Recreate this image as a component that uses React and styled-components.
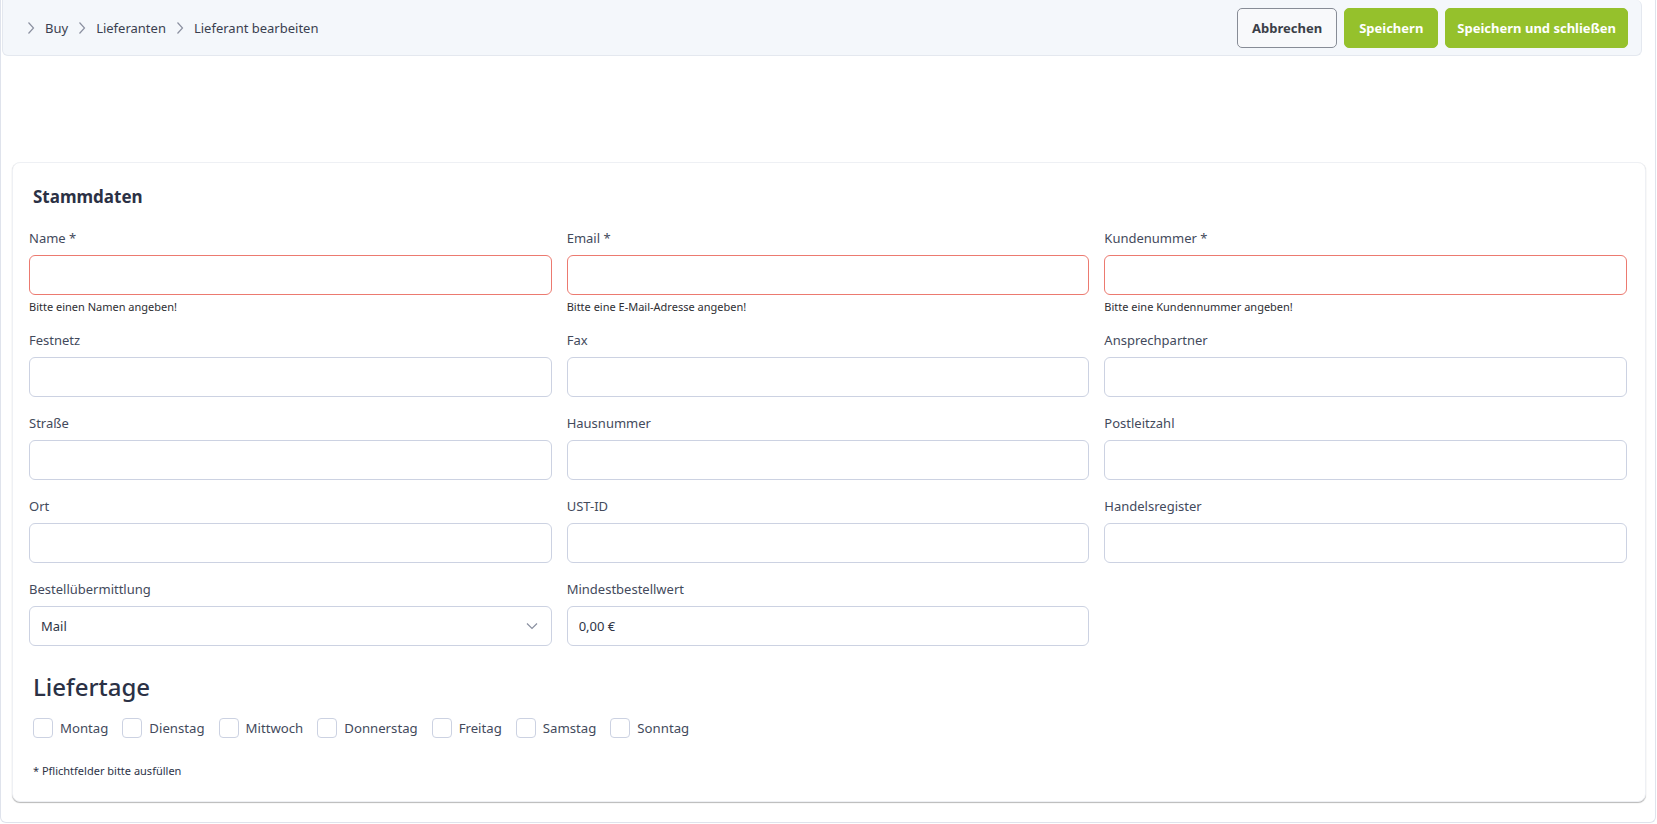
import React from "react";
import styled, { createGlobalStyle } from "styled-components";

const GlobalStyle = createGlobalStyle`
  html, body {
    margin: 0;
    padding: 0;
    background: #ffffff;
  }
  body {
    font-family: "Noto Sans", "Open Sans", "Liberation Sans", sans-serif;
    color: #3d4456;
  }
  * {
    box-sizing: border-box;
  }
`;

const Frame = styled.div`
  width: 1656px;
  height: 823px;
  border: 1px solid #dfe3ec;
  border-top: none;
  border-radius: 0 0 6px 6px;
  display: flex;
  flex-direction: column;
`;

const Header = styled.header`
  height: 56px;
  margin: 0 13px 0 1px;
  background: #f4f7fb;
  border: 1px solid #e4e8ef;
  border-top: none;
  border-radius: 0 6px 6px 6px;
  display: flex;
  align-items: center;
  justify-content: space-between;
  padding: 0 13px 0 24px;
`;

const Crumbs = styled.nav`
  display: flex;
  align-items: center;
  gap: 10px;
  font-size: 13px;
  color: #3a3f50;
`;

const Crumb = styled.span`
  line-height: 20px;
`;

const Actions = styled.div`
  display: flex;
  gap: 7px;
`;

const Button = styled.button`
  height: 40px;
  padding: 0 ${(p) => (p.$wide ? "11px" : "14px")};
  border-radius: 5px;
  font-family: inherit;
  font-size: 13px;
  font-weight: 700;
  cursor: pointer;
  border: 1px solid ${(p) => (p.$primary ? "#95c12c" : "#878c96")};
  background: ${(p) => (p.$primary ? "#95c12c" : "#f8f9fb")};
  color: ${(p) => (p.$primary ? "#ffffff" : "#3b3f48")};
`;

const Card = styled.section`
  margin: 106px 9px 20px 11px;
  flex: 1;
  background: #ffffff;
  border: 1px solid #eef0f4;
  border-radius: 8px;
  box-shadow: 0 1px 1px rgba(0, 0, 0, 0.28);
  padding: 22px 18px 0 16px;
`;

const Title = styled.h2`
  margin: 0 0 19px 4px;
  font-size: 17px;
  line-height: 24px;
  font-weight: 700;
  color: #2b3145;
`;

const Grid = styled.div`
  display: grid;
  grid-template-columns: repeat(3, 1fr);
  column-gap: 15px;
  row-gap: 16px;
`;

const Field = styled.div`
  display: flex;
  flex-direction: column;
`;

const Label = styled.label`
  font-size: 13px;
  line-height: 20px;
  margin-bottom: 7px;
  color: #434a5c;
`;

const Input = styled.input`
  height: 40px;
  width: 100%;
  border: 1px solid ${(p) => (p.$error ? "#ec7a70" : "#ccd2e2")};
  border-radius: 6px;
  padding: 0 11px;
  font-family: inherit;
  font-size: 13px;
  color: #2f3546;
  background: #ffffff;
  outline: none;
`;

const SelectBox = styled.div`
  height: 40px;
  border: 1px solid #ccd2e2;
  border-radius: 6px;
  padding: 0 13px 0 11px;
  display: flex;
  align-items: center;
  justify-content: space-between;
  font-size: 13px;
  color: #2f3546;
`;

const ErrorText = styled.div`
  margin-top: 5px;
  font-size: 11px;
  line-height: 14px;
  color: #2e2e33;
`;

const DaysTitle = styled.h3`
  margin: 25px 0 15px 4px;
  font-size: 24px;
  line-height: 32px;
  font-weight: 500;
  color: #2b3145;
`;

const Days = styled.div`
  display: flex;
  align-items: center;
  gap: 14px;
  margin-left: 4px;
`;

const Day = styled.label`
  display: flex;
  align-items: center;
  gap: 7px;
  font-size: 13.2px;
  line-height: 20px;
  color: #434a5c;
`;

const Box = styled.span`
  width: 20px;
  height: 20px;
  border: 1px solid #ccd2e2;
  border-radius: 4px;
  background: #ffffff;
`;

const Note = styled.p`
  margin: 25px 0 0 4px;
  font-size: 11px;
  line-height: 16px;
  color: #2d3347;
`;

const Chevron = () => (
  <svg width="8" height="14" viewBox="0 0 8 14" fill="none">
    <path d="M1.5 1.5 L6.5 7 L1.5 12.5" stroke="#8b90a0" strokeWidth="1.2" />
  </svg>
);

const ChevronDown = () => (
  <svg width="12" height="8" viewBox="0 0 12 8" fill="none">
    <path d="M1 1.5 L6 6.5 L11 1.5" stroke="#8a90a0" strokeWidth="1.2" />
  </svg>
);

const fields = [
  { label: "Name *", error: "Bitte einen Namen angeben!" },
  { label: "Email *", error: "Bitte eine E-Mail-Adresse angeben!" },
  { label: "Kundenummer *", error: "Bitte eine Kundennummer angeben!" },
  { label: "Festnetz" },
  { label: "Fax" },
  { label: "Ansprechpartner" },
  { label: "Straße" },
  { label: "Hausnummer" },
  { label: "Postleitzahl" },
  { label: "Ort" },
  { label: "UST-ID" },
  { label: "Handelsregister" },
];

const days = ["Montag", "Dienstag", "Mittwoch", "Donnerstag", "Freitag", "Samstag", "Sonntag"];

export default function App() {
  return (
    <>
      <GlobalStyle />
      <Frame>
        <Header>
          <Crumbs>
            <Chevron />
            <Crumb>Buy</Crumb>
            <Chevron />
            <Crumb>Lieferanten</Crumb>
            <Chevron />
            <Crumb>Lieferant bearbeiten</Crumb>
          </Crumbs>
          <Actions>
            <Button>Abbrechen</Button>
            <Button $primary>Speichern</Button>
            <Button $primary $wide>Speichern und schließen</Button>
          </Actions>
        </Header>

        <Card>
          <Title>Stammdaten</Title>
          <Grid>
            {fields.map((f) => (
              <Field key={f.label}>
                <Label>{f.label}</Label>
                <Input $error={!!f.error} />
                {f.error && <ErrorText>{f.error}</ErrorText>}
              </Field>
            ))}
            <Field>
              <Label>Bestellübermittlung</Label>
              <SelectBox>
                <span>Mail</span>
                <ChevronDown />
              </SelectBox>
            </Field>
            <Field>
              <Label>Mindestbestellwert</Label>
              <Input defaultValue="0,00 €" />
            </Field>
          </Grid>

          <DaysTitle>Liefertage</DaysTitle>
          <Days>
            {days.map((d) => (
              <Day key={d}>
                <Box />
                {d}
              </Day>
            ))}
          </Days>
          <Note>* Pflichtfelder bitte ausfüllen</Note>
        </Card>
      </Frame>
    </>
  );
}
